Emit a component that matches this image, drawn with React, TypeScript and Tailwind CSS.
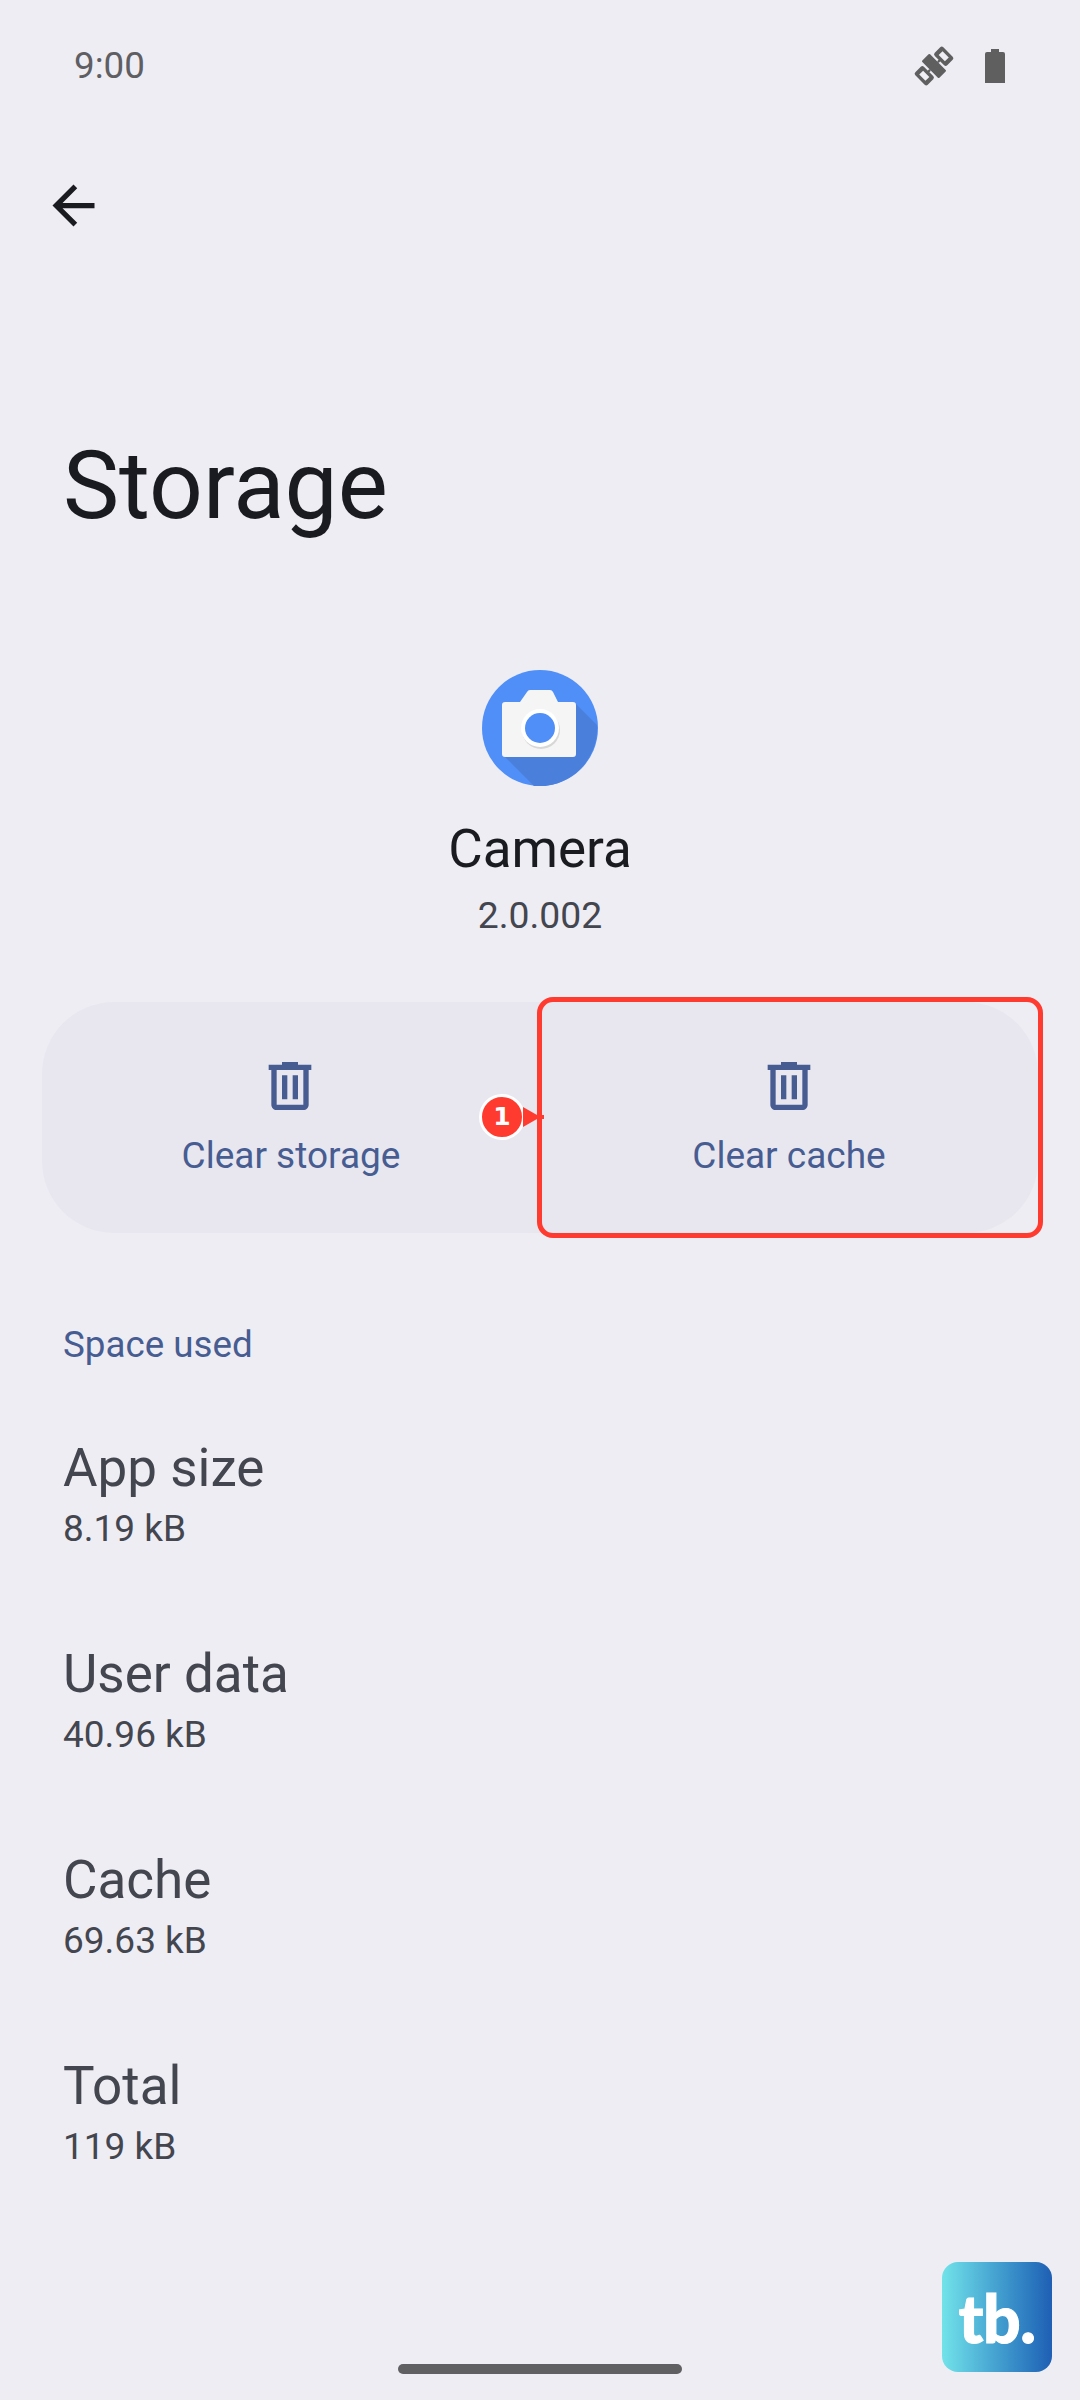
const Trash = ({ className }: { className: string }) => (
  <svg viewBox="0 0 24 24" className={className}>
    <path d="M15 4V3H9v1H4v2h1v13c0 1.1.9 2 2 2h10c1.1 0 2-.9 2-2V6h1V4h-5zm2 15H7V6h10v13zM9 8h2v9H9zm4 0h2v9h-2z" />
  </svg>
);

const Action = ({ label, iconClass }: { label: string; iconClass: string }) => (
  <div className="flex-1 flex flex-col items-center pt-[52px]">
    <Trash className={iconClass} />
    <span className="mt-[13px] text-[37px] leading-[50px] text-[#475d92]">{label}</span>
  </div>
);

const Row = ({ title, value }: { title: string; value: string }) => (
  <div className="h-[206px] px-[63px] pt-[45px]">
    <div className="text-[53px] leading-[62px] text-[#44464f]">{title}</div>
    <div className="mt-[4px] text-[37px] leading-[52px] text-[#44464f]">{value}</div>
  </div>
);

export default function App() {
  return (
    <div
      className="relative w-[1080px] h-[2400px] overflow-hidden bg-[#eeedf4]"
      style={{ fontFamily: "Roboto, sans-serif" }}
    >
      <div className="h-[132px] flex items-center justify-between pl-[74px] pr-[75px]">
        <span className="text-[36.75px] leading-[50px] text-[#5f5f63]">9:00</span>
        <div className="flex items-center gap-[29px]">
          <svg viewBox="0 0 40 40" className="w-[44px] h-[44px] fill-[#5f5f5f]">
            <g transform="rotate(-45 20 20)">
              <rect x="15" y="9" width="10" height="22" rx="1" />
              <rect x="25" y="19" width="3" height="2" />
              <rect x="12" y="19" width="3" height="2" />
              <path fillRule="evenodd" d="M29 12h7a2 2 0 0 1 2 2v12a2 2 0 0 1-2 2h-7a2 2 0 0 1-2-2V14a2 2 0 0 1 2-2zm1 4v8h5v-8z" />
              <path fillRule="evenodd" d="M4 12h7a2 2 0 0 1 2 2v12a2 2 0 0 1-2 2H4a2 2 0 0 1-2-2V14a2 2 0 0 1 2-2zm1 4v8h5v-8z" />
            </g>
          </svg>
          <svg viewBox="0 0 20 34" className="w-[20px] h-[34px] fill-[#5f5f5f]">
            <path d="M6 0h8v3h4a2 2 0 0 1 2 2v29H0V5a2 2 0 0 1 2-2h4z" />
          </svg>
        </div>
      </div>

      <div className="h-[146px] pl-[42px] pt-[42px]">
        <svg viewBox="0 0 24 24" className="w-[63px] h-[63px] fill-[#1a1b20]">
          <path d="M20 11H7.83l5.59-5.59L12 4l-8 8 8 8 1.41-1.41L7.83 13H20v-2z" />
        </svg>
      </div>

      <div className="h-[392px] pl-[63px] pt-[153px] text-[94.5px] leading-[110px] text-[#1a1b20]">Storage</div>

      <div className="flex flex-col items-center">
        <svg viewBox="482 670 116 116" className="w-[116px] h-[116px]">
          <circle cx="540" cy="728" r="58" fill="#4f8ff7" />
          <path d="M576 704 L597 725 A58 58 0 0 1 534 786 L504 756 Z" fill="#4a80dc" />
          <path d="M505 702h15l7-10q1-2 3-2h20q2 0 3 2l5 10h15q3 0 3 3v49q0 3-3 3h-68q-3 0-3-3v-49q0-3 3-3z" fill="#f5f5f5" />
          <circle cx="541" cy="730" r="19" fill="#000" opacity="0.12" />
          <circle cx="540" cy="728" r="19" fill="#fff" />
          <circle cx="540" cy="728" r="15" fill="#4f8ff7" />
        </svg>
        <div className="mt-[32px] text-[53px] leading-[62px] text-[#1a1b20]">Camera</div>
        <div className="mt-[10px] text-[37.3px] leading-[50px] text-[#44464f]">2.0.002</div>
      </div>

      <div className="relative mt-[62px] mx-[42px] h-[231px] flex rounded-[72px] bg-[#e8e7ef]">
        <Action label="Clear storage" iconClass="w-[64px] h-[64px] fill-[#475d92] -ml-[3px]" />
        <Action label="Clear cache" iconClass="w-[64px] h-[64px] fill-[#475d92]" />
        <div className="absolute left-[495px] -top-[5px] -right-[5px] -bottom-[5px] rounded-[16px] border-[5px] border-[#ff3b30]" />
        <div className="absolute left-[437px] top-[92px] w-[46px] h-[46px] rounded-full bg-[#ff3b30] border-[3px] border-white flex items-center justify-center text-white text-[25px] font-bold" style={{ fontFamily: "'DejaVu Sans', sans-serif" }}>1</div>
        <svg viewBox="0 0 21 24" className="absolute left-[481px] top-[103px] w-[21px] h-[24px] fill-[#ff3b30]">
          <path d="M0 2 L14 10h7v4h-7L0 22z" />
        </svg>
      </div>

      <div className="mt-[87px] px-[63px] text-[36.75px] leading-[50px] text-[#475d92]">Space used</div>
      <div className="mt-[22px]">
        <Row title="App size" value="8.19 kB" />
        <Row title="User data" value="40.96 kB" />
        <Row title="Cache" value="69.63 kB" />
        <Row title="Total" value="119 kB" />
      </div>

      <div className="absolute left-[398px] top-[2364px] w-[284px] h-[10px] rounded-full bg-[#606062]" />
      <div
        className="absolute left-[942px] top-[2262px] w-[110px] h-[110px] rounded-[16px] bg-gradient-to-r from-[#72e3e9] to-[#1f5fb4] flex items-center justify-center text-white text-[66px] font-black tracking-[-0.5px] [-webkit-text-stroke:1px_white]"
        style={{ fontFamily: "Lato, sans-serif" }}
      >
        tb.
      </div>
    </div>
  );
}
